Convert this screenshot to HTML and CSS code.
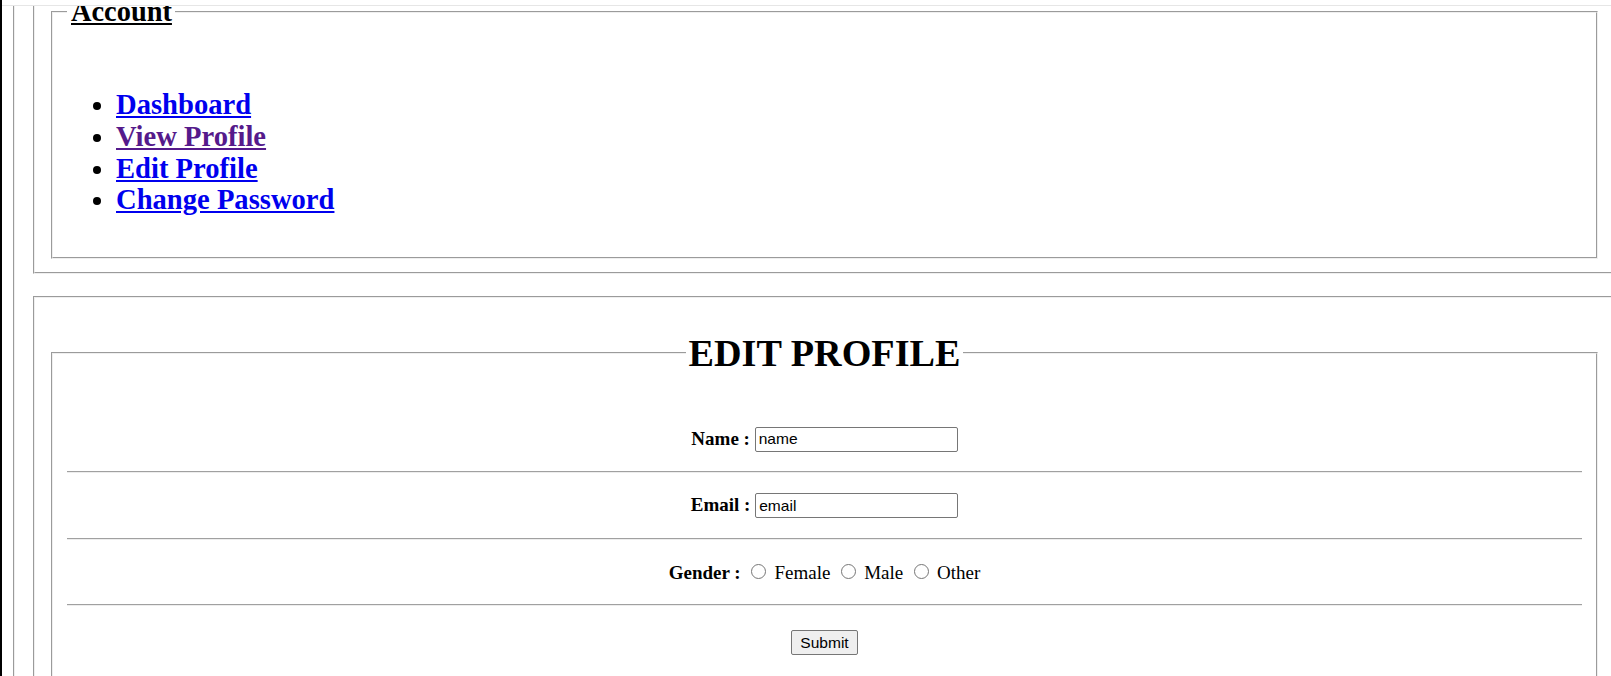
FILE: index.html
```html
<!DOCTYPE html>
<html lang="en">
<head>
<meta charset="utf-8">
<title>Edit Profile</title>
<link rel="stylesheet" href="styles.css">
</head>
<body>
<div class="screen">
  <div class="topstrip"></div>
  <div class="viewport">
    <fieldset class="shell">
      <fieldset class="panel panel-account">
        <fieldset class="box box-account">
          <legend class="account-legend">Account</legend>
          <ul class="menu">
            <li><a href="#dashboard">Dashboard</a></li>
            <li><a class="visited" href="#view-profile">View Profile</a></li>
            <li><a href="#edit-profile">Edit Profile</a></li>
            <li><a href="#change-password">Change Password</a></li>
          </ul>
        </fieldset>
      </fieldset>
      <fieldset class="panel panel-edit">
        <fieldset class="box box-edit">
          <legend class="edit-legend">EDIT PROFILE</legend>
          <form class="form">
            <div class="row row-name">
              <div class="field"><label class="lab" for="name">Name :</label> <input class="text-input" id="name" type="text" value="name"></div>
            </div>
            <hr class="sep">
            <div class="row row-email">
              <div class="field"><label class="lab" for="email">Email :</label> <input class="text-input" id="email" type="text" value="email"></div>
            </div>
            <hr class="sep">
            <div class="row row-gender">
              <div class="field"><span class="lab">Gender :</span> <input class="radio" type="radio" name="gender" id="g-f"><label for="g-f"> Female</label> <input class="radio" type="radio" name="gender" id="g-m"><label for="g-m"> Male</label> <input class="radio" type="radio" name="gender" id="g-o"><label for="g-o"> Other</label></div>
            </div>
            <hr class="sep">
            <div class="row row-submit">
              <button class="submit-btn" type="button">Submit</button>
            </div>
          </form>
        </fieldset>
      </fieldset>
    </fieldset>
  </div>
</div>
</body>
</html>
```
FILE: styles.css
```css
html, body {
  margin: 0;
  padding: 0;
  height: 100%;
  overflow: hidden;
  background: #fff;
  font-family: "Liberation Serif", "Times New Roman", serif;
  color: #000;
}

.screen {
  height: 676px;
  border-left: 2px solid #000;
  display: flex;
  flex-direction: column;
  overflow: hidden;
}

.topstrip {
  height: 5px;
  flex: none;
  border-bottom: 1px solid #e6e6e6;
}

.viewport {
  flex: 1;
  overflow: hidden;
  padding-left: 11px;
}

.shell {
  margin: -30px 0 0 0;
  padding: 8px 16px 0 16px;
  width: 1650px;
  box-sizing: border-box;
  min-width: 0;
}

.panel {
  margin: 0 2px;
  padding: 8px 14px 13px;
  width: 1583px;
  box-sizing: border-box;
  min-width: 0;
}

.panel-edit {
  margin-top: 22px;
  padding-top: 33px;
}

.box {
  margin: 0 2px;
  padding: 0 14px 12px;
  min-width: 0;
}

.account-legend {
  font-weight: bold;
  font-size: 28.4px;
  line-height: 32px;
  text-decoration: underline;
  padding: 0 3px 0 4px;
}

.menu {
  margin: 61px 0 29px;
  padding-left: 49px;
  font-weight: bold;
  font-size: 28.6px;
  line-height: 31.8px;
}

.menu a {
  color: #0000ee;
  text-decoration: underline;
}

.menu a.visited {
  color: #551a8b;
}

.edit-legend {
  font-weight: bold;
  font-size: 38.2px;
  line-height: 44px;
  margin: 0 auto;
  padding: 0 3px;
}

.form {
  margin: 0;
  padding-top: 32px;
}

.row {
  display: flex;
  align-items: center;
  justify-content: center;
  height: 65px;
}

.row-name {
  height: 64px;
}

.row-gender {
  height: 64px;
}

.row-submit {
  height: 73px;
}

.sep {
  margin: 0;
  height: 0;
  border: 0;
  border-top: 1px solid #a0a0a0;
  border-bottom: 1px solid #ededed;
}

.field {
  font-size: 19px;
  line-height: normal;
  white-space: nowrap;
}

.lab {
  font-weight: bold;
}

.text-input {
  width: 203px;
  height: 25px;
  box-sizing: border-box;
  margin: 0;
  padding: 1px 3px;
  font-family: "Liberation Sans", Arial, sans-serif;
  font-size: 15.56px;
  color: #000;
  background: #fff;
  border: 1px solid #767676;
  border-radius: 2px;
}

.radio {
  width: 15px;
  height: 15px;
  margin: 3.5px 3.5px 0 5.8px;
}

.submit-btn {
  height: 25px;
  padding: 0 8px;
  margin: 0;
  font-family: "Liberation Sans", Arial, sans-serif;
  font-size: 15.56px;
  color: #000;
  background: #efefef;
  border: 1px solid #767676;
  border-radius: 2px;
}
```
